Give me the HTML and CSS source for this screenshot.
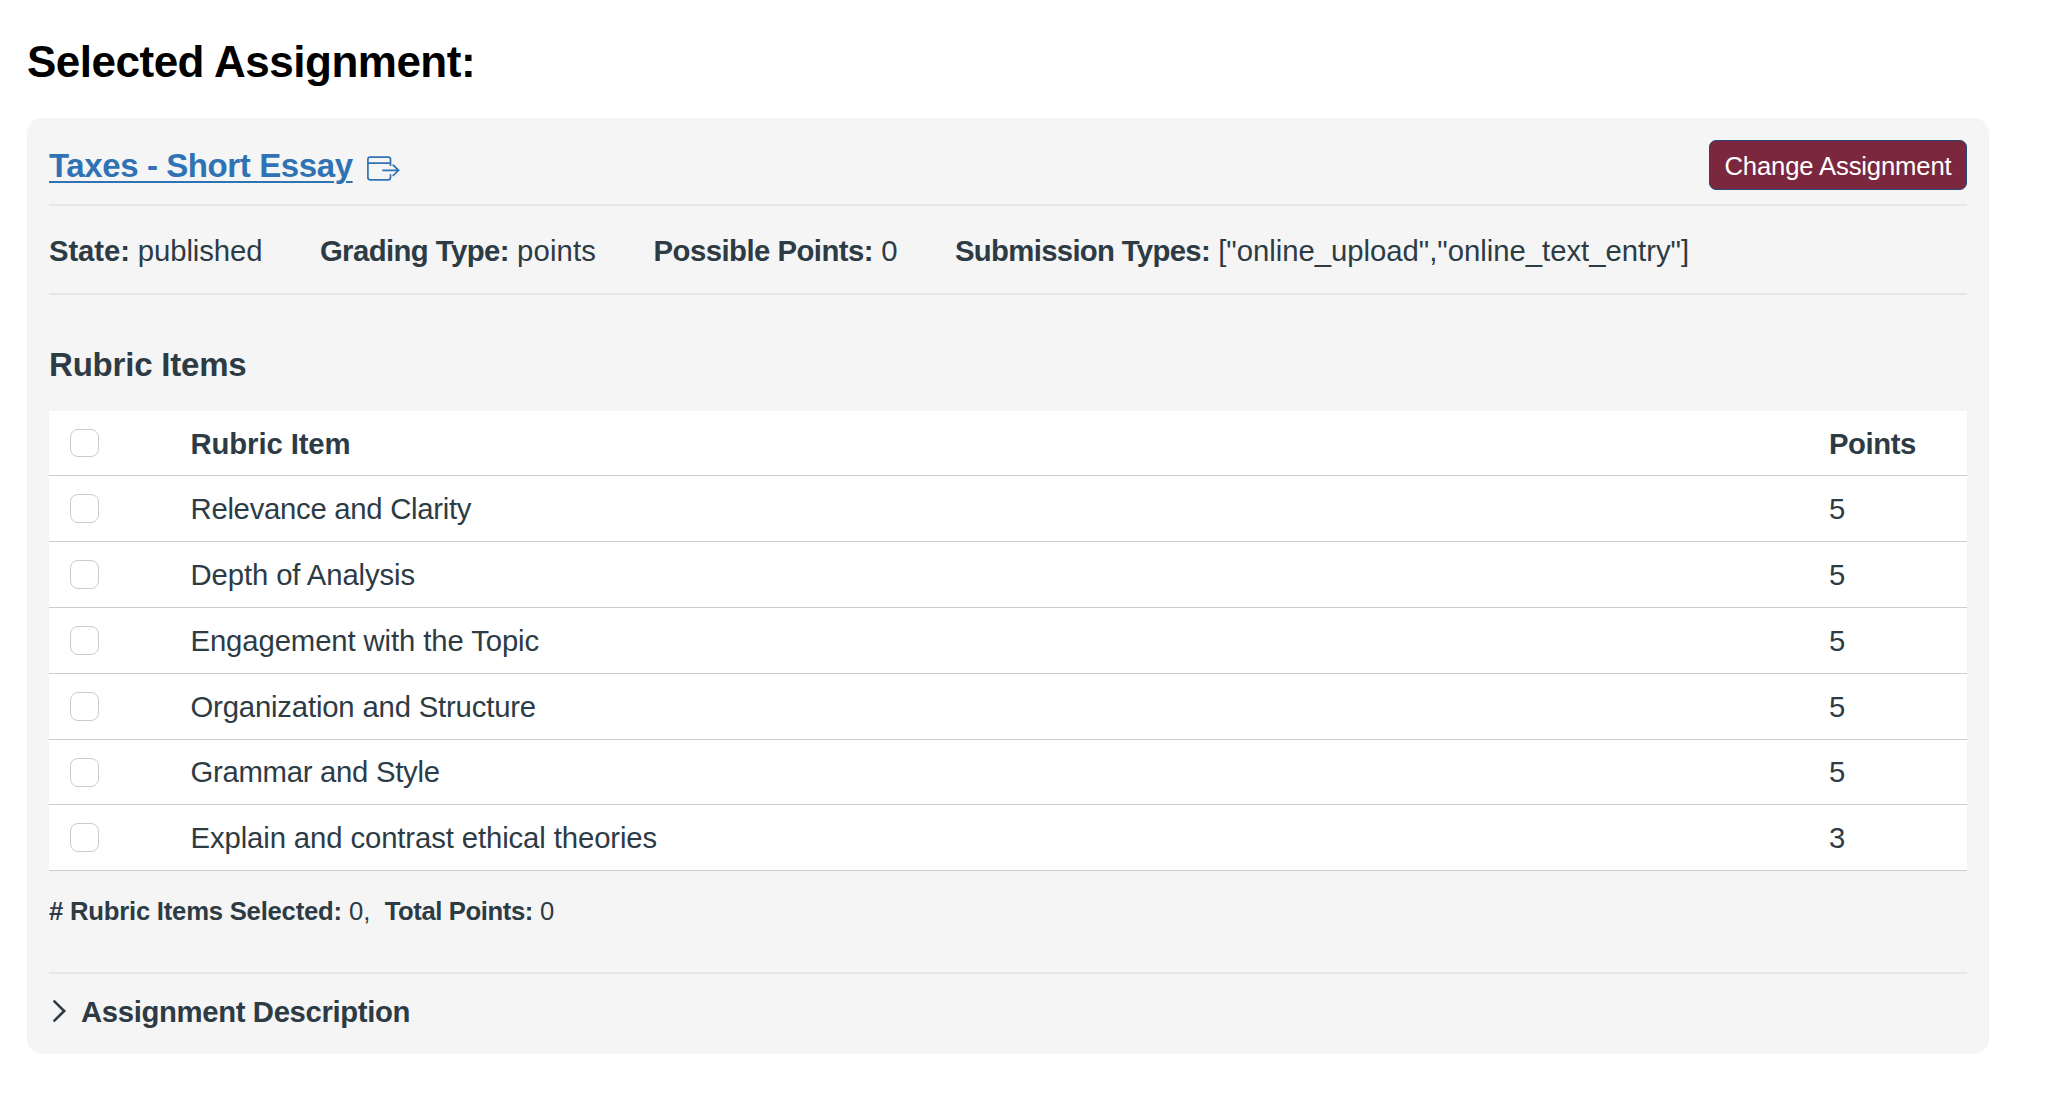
FILE: index.html
```html
<!DOCTYPE html>
<html lang="en">
<head>
<meta charset="utf-8">
<title>Selected Assignment</title>
<link rel="stylesheet" href="styles.css">
</head>
<body>
<h1 class="page-title">Selected Assignment:</h1>
<main class="card">
  <header class="card-header">
    <a class="assignment-link" href="#"><span class="link-text">Taxes - Short Essay</span>
      <svg class="link-icon" width="34" height="26" viewBox="0 0 34 26" fill="none" stroke="currentColor" stroke-width="1.7">
        <path d="M23.5 10V3.4Q23.5 1.1 21.2 1.1H3.2Q.9 1.1 .9 3.4V21.6Q.9 23.9 3.2 23.9H21.2Q23.5 23.9 23.5 21.6V18.3M1 7.1H23.5M15.3 14.3H31.5M25.7 8.6L31.6 14.3L25.7 20"/>
      </svg>
    </a>
    <button class="change-button" type="button">Change Assignment</button>
  </header>
  <section class="details">
    <div class="detail state"><b>State:</b> <span>published</span></div>
    <div class="detail grading"><b>Grading Type:</b> <span>points</span></div>
    <div class="detail possible"><b>Possible Points:</b> <span>0</span></div>
    <div class="detail submission"><b>Submission Types:</b> <span>["online_upload","online_text_entry"]</span></div>
  </section>
  <h2 class="section-title">Rubric Items</h2>
  <table class="rubric">
    <thead>
      <tr><th class="check-cell"><input class="check" type="checkbox" aria-label="Select all"></th><th>Rubric Item</th><th class="points">Points</th></tr>
    </thead>
    <tbody>
      <tr class="snug"><td class="check-cell"><input class="check" type="checkbox"></td><td>Relevance and Clarity</td><td class="points">5</td></tr>
      <tr><td class="check-cell"><input class="check" type="checkbox"></td><td>Depth of Analysis</td><td class="points">5</td></tr>
      <tr><td class="check-cell"><input class="check" type="checkbox"></td><td>Engagement with the Topic</td><td class="points">5</td></tr>
      <tr class="tight"><td class="check-cell"><input class="check" type="checkbox"></td><td>Organization and Structure</td><td class="points">5</td></tr>
      <tr class="snug short"><td class="check-cell"><input class="check" type="checkbox"></td><td>Grammar and Style</td><td class="points">5</td></tr>
      <tr><td class="check-cell"><input class="check" type="checkbox"></td><td>Explain and contrast ethical theories</td><td class="points">3</td></tr>
    </tbody>
  </table>
  <p class="totals"><b class="selected-label">#&nbsp;Rubric Items Selected:</b> 0,&nbsp; <b class="total-label">Total Points:</b> 0</p>
  <div class="description">
    <svg class="chevron" width="14" height="22" viewBox="0 0 14 22" fill="none" stroke="currentColor" stroke-width="2.6" stroke-linecap="round"><path d="M1.4 1.4L11.2 11L1.4 20.6"/></svg>
    <span>Assignment Description</span>
  </div>
</main>
</body>
</html>
```
FILE: styles.css
```css
* { box-sizing: border-box; }
body {
  margin: 0;
  padding: 33px 83px 0 27px;
  background: #fff;
  color: #2d3b45;
  font: 29.3px/44px "Liberation Sans", Arial, sans-serif;
}
.page-title {
  margin: 0 0 27px;
  color: #000;
  font-size: 44px;
  line-height: 58px;
  letter-spacing: -0.5px;
}
.card {
  height: 936px;
  padding: 22px;
  border-radius: 15px;
  background: #f5f5f5;
}
.card-header {
  display: flex;
  justify-content: space-between;
  height: 66px;
  border-bottom: 2px solid #e5e5ea;
}
.assignment-link {
  display: flex;
  gap: 14px;
  color: #2f73b4;
  font-size: 33px;
  font-weight: bold;
  line-height: 52px;
  text-decoration: none;
}
.link-text {
  letter-spacing: -0.4px;
  text-decoration: underline;
  text-decoration-thickness: 2px;
  text-underline-offset: 4px;
}
.link-icon { margin-top: 15.5px; }
.change-button {
  width: 258px;
  height: 50px;
  padding: 2px 0 0;
  border: 1px solid #28487b;
  border-radius: 7px;
  background: #7b283f;
  color: #fff;
  font: 25.7px/46px "Liberation Sans", Arial, sans-serif;
  letter-spacing: -0.17px;
}
.details {
  display: flex;
  gap: 57.5px;
  height: 89px;
  padding-top: 23px;
  border-bottom: 2px solid #e5e5ea;
  white-space: nowrap;
}
.state { letter-spacing: -0.1px; }
.grading b { letter-spacing: -0.57px; }
.grading span { letter-spacing: 0.15px; }
.possible b { letter-spacing: -0.53px; }
.submission b { letter-spacing: -0.67px; }
.submission span { letter-spacing: -0.02px; }
.section-title {
  margin: 48px 0 24px;
  font-size: 33px;
  line-height: 44px;
  letter-spacing: -0.2px;
}
.rubric {
  width: 100%;
  table-layout: fixed;
  border-collapse: separate;
  border-spacing: 0;
  background: #fff;
}
.rubric th, .rubric td {
  height: 66px;
  padding: 0;
  border-bottom: 1px solid #c7cdd1;
  line-height: 40px;
  text-align: left;
  letter-spacing: -0.11px;
}
.rubric th { height: 65px; padding-top: 1px; }
.rubric .snug td { letter-spacing: -0.28px; }
.rubric .tight td { letter-spacing: -0.18px; }
.rubric .short td { height: 65px; }
.rubric .check-cell { width: 141.5px; padding: 0 0 0 21px; }
.rubric .points { width: 138px; }
.rubric th.points { letter-spacing: -0.45px; }
.check {
  display: block;
  width: 29px;
  height: 29px;
  margin: 0;
  appearance: none;
  border: 1px solid #c7cdd1;
  border-radius: 8px;
  background: #fff;
}
th .check { height: 28px; }
.totals {
  margin: 18px 0 0;
  font-size: 25.7px;
  line-height: 44px;
}
.selected-label { letter-spacing: -0.23px; }
.total-label { letter-spacing: -0.42px; }
.description {
  display: flex;
  gap: 14px;
  margin-top: 39px;
  padding: 16px 0 0 4px;
  border-top: 2px solid #e5e5ea;
  font-weight: bold;
  letter-spacing: -0.36px;
}
.chevron { margin-top: 10px; }
```
